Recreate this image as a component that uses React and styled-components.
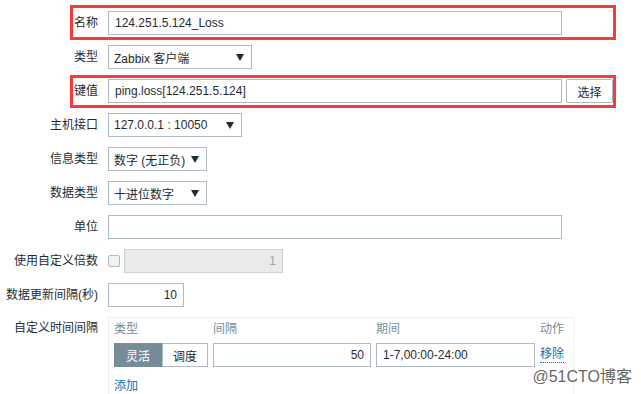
import React from 'react'
import styled, { createGlobalStyle, css } from 'styled-components'

const GlobalStyle = createGlobalStyle`
  body {
    margin: 0;
    background: #fff;
    font-family: "Liberation Sans", Arial, "Noto Sans CJK SC", sans-serif;
    font-size: 12px;
    color: #1f2c33;
  }
`

const Page = styled.div`
  position: relative;
  width: 641px;
  height: 394px;
  overflow: hidden;
`

const Form = styled.div`
  display: flex;
  flex-direction: column;
  gap: 10px;
  padding-top: 11px;
`

const Row = styled.div`
  position: relative;
  display: grid;
  grid-template-columns: 98px 1fr;
  column-gap: 10px;
  align-items: center;
  min-height: 24px;

  ${props => props.$top && css`
    align-items: start;
  `}

  ${props => props.$mark && css`
    &::after {
      content: '';
      position: absolute;
      left: 70px;
      width: 546px;
      top: ${props.$mark[0]}px;
      bottom: ${props.$mark[1]}px;
      border: 3px solid #f53c3c;
      box-sizing: border-box;
      pointer-events: none;
    }
  `}
`

const Label = styled.div`
  text-align: right;
  white-space: nowrap;
  line-height: 16px;
  ${props => props.$top && css`
    padding-top: 3px;
  `}
`

const Field = styled.div`
  display: flex;
  align-items: center;
  gap: 4px;
`

const TextInput = styled.input`
  box-sizing: border-box;
  width: ${props => props.$w}px;
  height: 24px;
  margin: 0;
  padding: 0 6px;
  border: 1px solid #acbbc2;
  border-radius: 0;
  background: #fff;
  font: inherit;
  color: #1f2c33;
  outline: none;
  text-align: ${props => (props.$right ? 'right' : 'left')};

  &:disabled {
    background: #ebebeb;
    border-color: #c8d3d8;
    color: #9aa5aa;
  }
`

const Select = styled.div`
  box-sizing: border-box;
  width: ${props => props.$w}px;
  height: 24px;
  padding: 0 7px 0 5px;
  border: 1px solid #acbbc2;
  display: flex;
  align-items: center;
  justify-content: space-between;
  white-space: nowrap;
`

const Arrow = () => (
  <svg width="8" height="7" viewBox="0 0 8 7">
    <path d="M0 0 H8 L4 7 Z" fill="#1f2c33" />
  </svg>
)

const Button = styled.button`
  box-sizing: border-box;
  width: 47px;
  height: 24px;
  margin: 0;
  padding: 0;
  border: 1px solid #acbbc2;
  border-radius: 2px;
  background: #fff;
  font: inherit;
  color: #1f2c33;
`

const Checkbox = styled.span`
  box-sizing: border-box;
  width: 12px;
  height: 12px;
  border: 1px solid #acbbc2;
  border-radius: 2px;
  background: #f2f2f2;
`

const Box = styled.div`
  width: 466px;
  height: 90px;
  box-sizing: border-box;
  border: 1px solid #ebeef0;
  border-bottom: none;
  padding: 3px 5px 0;
`

const Grid = styled.div`
  display: grid;
  grid-template-columns: 94px 158px 159px auto;
  column-gap: 5px;
  row-gap: 6px;
  align-items: center;
`

const Head = styled.div`
  color: #768d99;
  line-height: 16px;
`

const Toggle = styled.div`
  display: flex;
  height: 24px;
`

const ToggleItem = styled.div`
  box-sizing: border-box;
  width: ${props => props.$w}px;
  border: 1px solid #acbbc2;
  display: flex;
  align-items: center;
  justify-content: center;
  background: #fff;
  color: #1f2c33;

  ${props => props.$on && css`
    background: #768d99;
    border-color: #768d99;
    color: #fff;
  `}
`

const Link = styled.span`
  color: #0275b8;
  border-bottom: 1px dotted #0275b8;
  line-height: 15px;
  justify-self: start;
`

const AddLink = styled.div`
  margin-top: 11px;
  color: #0275b8;
  line-height: 16px;
`

const Watermark = styled.div`
  position: absolute;
  right: 9px;
  bottom: 8px;
  font-size: 16px;
  line-height: 18px;
  color: rgba(70, 70, 70, 0.85);
  text-shadow: 0 0 2px #fff;
`

export default function App() {
  return (
    <Page>
      <GlobalStyle />
      <Form>
        <Row $mark={[-6, -5]}>
          <Label>名称</Label>
          <Field><TextInput $w={454} readOnly value="124.251.5.124_Loss" /></Field>
        </Row>
        <Row>
          <Label>类型</Label>
          <Field><Select $w={144}>Zabbix 客户端<Arrow /></Select></Field>
        </Row>
        <Row $mark={[-4, -5]}>
          <Label>键值</Label>
          <Field>
            <TextInput $w={454} readOnly value="ping.loss[124.251.5.124]" />
            <Button>选择</Button>
          </Field>
        </Row>
        <Row>
          <Label>主机接口</Label>
          <Field><Select $w={134}>127.0.0.1 : 10050<Arrow /></Select></Field>
        </Row>
        <Row>
          <Label>信息类型</Label>
          <Field><Select $w={99}>数字 (无正负)<Arrow /></Select></Field>
        </Row>
        <Row>
          <Label>数据类型</Label>
          <Field><Select $w={99}>十进位数字<Arrow /></Select></Field>
        </Row>
        <Row>
          <Label>单位</Label>
          <Field><TextInput $w={454} readOnly value="" /></Field>
        </Row>
        <Row>
          <Label>使用自定义倍数</Label>
          <Field>
            <Checkbox />
            <TextInput $w={159} $right disabled value="1" />
          </Field>
        </Row>
        <Row>
          <Label>数据更新间隔(秒)</Label>
          <Field><TextInput $w={76} $right readOnly value="10" /></Field>
        </Row>
        <Row $top>
          <Label $top>自定义时间间隔</Label>
          <Box>
            <Grid>
              <Head>类型</Head>
              <Head>间隔</Head>
              <Head>期间</Head>
              <Head>动作</Head>
              <Toggle>
                <ToggleItem $w={48} $on>灵活</ToggleItem>
                <ToggleItem $w={46}>调度</ToggleItem>
              </Toggle>
              <TextInput $w={158} $right readOnly value="50" />
              <TextInput $w={159} readOnly value="1-7,00:00-24:00" />
              <Link>移除</Link>
            </Grid>
            <AddLink>添加</AddLink>
          </Box>
        </Row>
      </Form>
      <Watermark>@51CTO博客</Watermark>
    </Page>
  )
}
